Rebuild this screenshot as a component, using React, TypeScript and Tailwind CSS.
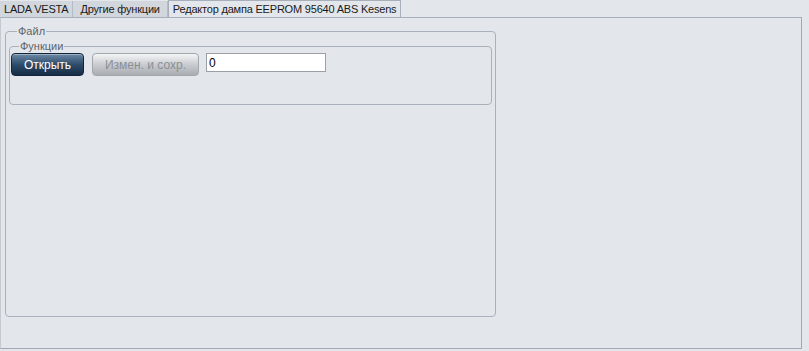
import React from 'react';

const font = { fontFamily: '"Liberation Sans", Tahoma, Arial, sans-serif' };

function Tab({ label, active, px }: { label: string; active?: boolean; px: string }) {
  return active ? (
    <div className={`-mb-px flex h-[18px] items-center border border-b-0 border-[#a7b0ba] bg-[#e3e7eb] text-[11px] tracking-[-0.2px] text-[#1a1a1a] ${px}`}>{label}</div>
  ) : (
    <div className={`mt-[1px] flex h-[16px] items-center border-r border-[#b3bcc5] bg-[#d2d7dd] text-[11px] tracking-[-0.2px] text-[#1a1a1a] ${px}`}>{label}</div>
  );
}

export default function App() {
  return (
    <div className="flex h-[351px] w-[809px] flex-col bg-[#e3e7eb]" style={font}>
      <div className="flex items-end">
        <Tab label="LADA VESTA" px="px-[4px]" />
        <Tab label="Другие функции" px="px-[7px]" />
        <Tab label="Редактор дампа EEPROM 95640 ABS Kesens" px="px-[4px]" active />
      </div>
      <div className="h-[332px] w-[802px] border border-t-[#a7b0ba] border-r-[#a0a9b3] border-b-[#a0a9b3] border-l-[#c3cad1] pl-[4px] pt-[7px]">
        <fieldset className="h-[292px] w-[490px] rounded-[4px] border border-[#a9b2bc] px-[3px] pt-[2px]">
          <legend className="ml-[8px] px-[1px] text-[11px] leading-[13px] text-[#5f6368]">Файл</legend>
          <fieldset className="h-[65px] w-[483px] rounded-[4px] border border-[#a9b2bc] pl-[1px]">
            <legend className="ml-[8px] px-[1px] text-[11px] leading-[13px] text-[#5f6368]">Функции</legend>
            <div className="flex items-start">
              <button className="h-[23px] w-[73px] rounded-[4px] border border-[#13253a] bg-gradient-to-b from-[#6d8aa6] via-[#2e4c6c] to-[#172c44] text-[12px] text-white shadow-[inset_0_1px_0_rgba(255,255,255,0.35)]">
                Открыть
              </button>
              <button className="ml-[8px] h-[23px] w-[107px] rounded-[4px] border border-[#a3a8ad] bg-gradient-to-b from-[#f4f5f6] via-[#c9ccd0] to-[#a9adb2] text-[12px] text-[#8a8f94]">
                Измен. и сохр.
              </button>
              <input
                readOnly
                value="0"
                className="ml-[7px] h-[19px] w-[120px] border border-[#9aa0a6] bg-white px-[2px] text-[12px] text-black outline-none"
              />
            </div>
          </fieldset>
        </fieldset>
      </div>
    </div>
  );
}
